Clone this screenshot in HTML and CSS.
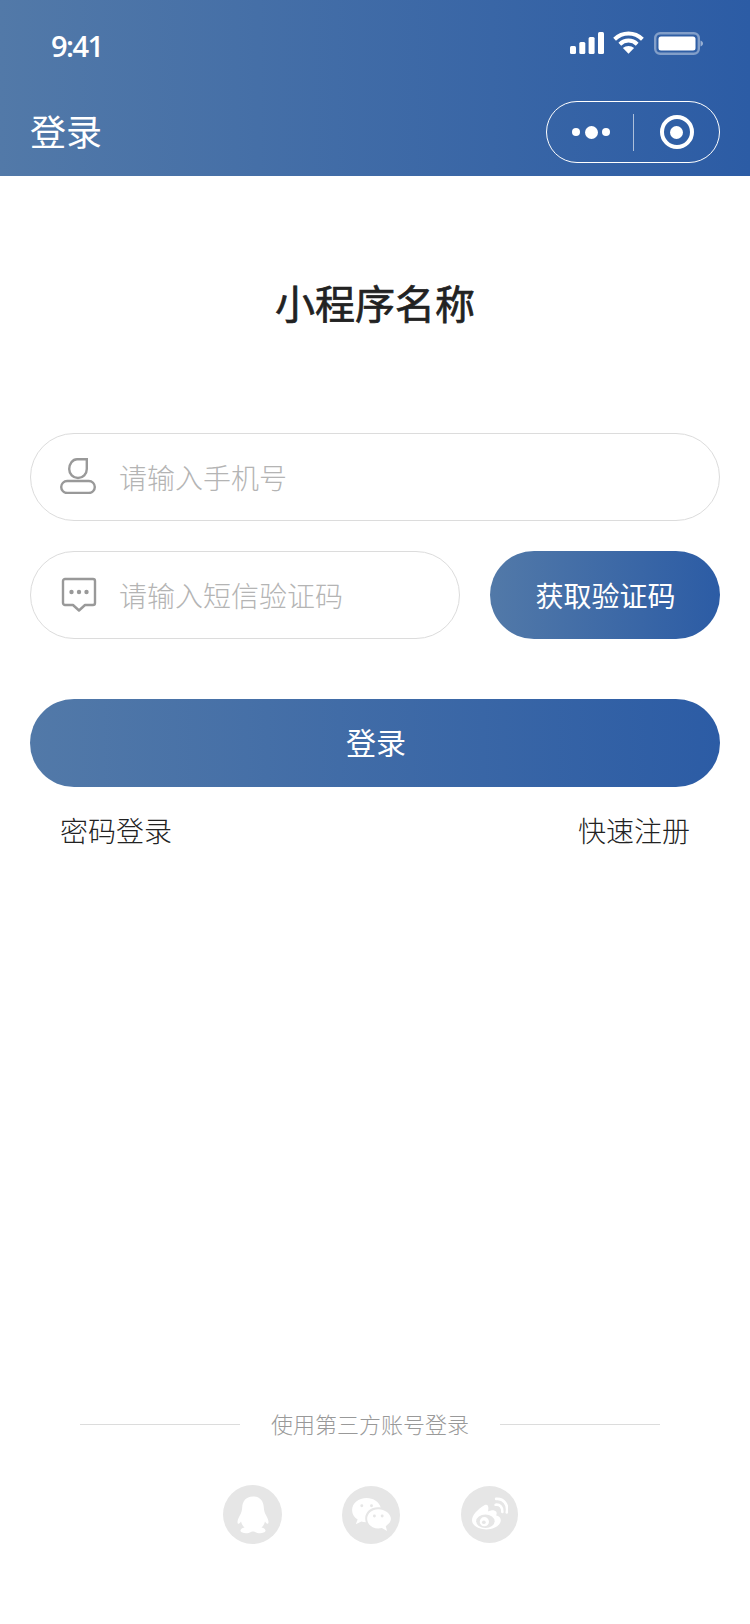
FILE: index.html
```html
<!DOCTYPE html>
<html lang="zh-CN">
    <head>
    <meta charset="utf-8">
    <title>登录</title>
    <link rel="stylesheet" href="styles.css">
    </head>

    <body>
        <div class="page">
            <!-- 顶部状态栏和导航 -->
            <div class="top">
                <div class="status">
                    <span class="time">9:41</span>
                    <div class="status-icons">
                        <svg width="34" height="22" viewBox="0 0 34 22" fill="#fff">
                            <rect x="0" y="14" width="6" height="8" rx="1.5"/>
                            <rect x="9.3" y="10" width="6" height="12" rx="1.5"/>
                            <rect x="18.6" y="5" width="6" height="17" rx="1.5"/>
                            <rect x="28" y="0" width="6" height="22" rx="1.5"/>
                        </svg>
                        <svg class="wifi" width="31" height="23" viewBox="0 0 31 23" fill="none" stroke="#fff" stroke-width="4">
                            <path d="M1.6 8.2C9.4 .6 21.6 .6 29.4 8.2"/>
                            <path d="M6.8 13.2C11.8 8.4 19.2 8.4 24.2 13.2"/>
                            <path d="M15.5 22.8L9.9 17C13 14.2 18 14.2 21.1 17Z" fill="#fff" stroke="none"/>
                        </svg>
                        <svg width="49" height="23" viewBox="0 0 49 23">
                            <rect x="1.200" y="1.200" width="43.600" height="20.600" rx="5" fill="none" stroke="#fff" stroke-opacity=".4" stroke-width="2.400"/>
                            <rect x="4.500" y="4.500" width="37" height="14" rx="2.500" fill="#fff"/>
                            <path d="M46.500 8.500C48 9 49 10.200 49 11.500S48 14 46.500 14.500Z" fill="#fff" fill-opacity=".5"/>
                        </svg>
                    </div>
                </div>
                <div class="nav">
                    <span class="nav-title">登录</span>
                    <div class="capsule">
                        <div class="capsule-more"><i></i><i class="big"></i><i></i></div>
                        <div class="capsule-line"></div>
                        <div class="capsule-close"><i></i></div>
                    </div>
                </div>
            </div>

            <div class="app-name">小程序名称</div>

            <!-- 登录表单 -->
            <div class="form">
                <div class="field">
                    <svg class="field-icon icon-user" width="36" height="36" viewBox="0 0 36 36" fill="none" stroke="#999" stroke-width="2.4">
                        <path d="M17 1.200H26.800V11C26.800 16 23 20 18 20S9.200 16 9.200 11 12.500 1.200 17 1.200Z"/>
                        <rect x="1.200" y="23" width="33.600" height="12" rx="6"/>
                    </svg>
                    <span class="placeholder">请输入手机号</span>
                </div>
                <div class="code-row">
                    <div class="field field-code">
                        <svg class="field-icon icon-msg" width="36" height="36" viewBox="0 0 36 36" fill="none" stroke="#999" stroke-width="2.4" stroke-linejoin="round">
                            <path d="M4 2H32C33 2 34 3 34 4V26C34 27 33 28 32 28H24L18 33.500 12 28H4C3 28 2 27 2 26V4C2 3 3 2 4 2Z"/>
                            <circle cx="10.500" cy="15" r="2.200" fill="#999" stroke="none"/>
                            <circle cx="18" cy="15" r="2.200" fill="#999" stroke="none"/>
                            <circle cx="25.500" cy="15" r="2.200" fill="#999" stroke="none"/>
                        </svg>
                        <span class="placeholder">请输入短信验证码</span>
                    </div>
                    <div class="btn btn-code">获取验证码</div>
                </div>
                <div class="btn btn-login">登录</div>
                <div class="links">
                    <span>密码登录</span>
                    <span>快速注册</span>
                </div>
            </div>

            <!-- 第三方登录 -->
            <div class="other">
                <div class="other-title">
                    <div class="other-line"></div>
                    <span>使用第三方账号登录</span>
                    <div class="other-line"></div>
                </div>
                <div class="other-icons">
                    <div class="circle">
                        <svg width="32" height="38" viewBox="0 0 32 37" fill="#fff">
                            <path d="M16 0C8.500 0 5.500 5 5.200 11 5 14 4.500 16 2.800 19 .8 22.500 0 25.500 .8 27 1.800 28 3.200 26.500 4 25 4.600 27.500 5.800 29.500 7.500 31 4.500 31.800 3.200 33 3.500 34.500 4.300 37 11 37.300 14 35.400 15.300 34.800 16.700 34.800 18 35.400 21 37.300 27.700 37 28.500 34.500 28.800 33 27.500 31.800 24.500 31 26.200 29.500 27.400 27.500 28 25 28.800 26.500 30.200 28 31.200 27 32 25.500 31.200 22.500 29.200 19 27.500 16 27 14 26.800 11 26.500 5 23.500 0 16 0Z"/>
                        </svg>
                    </div>
                    <div class="circle circle-wechat">
                        <svg width="39" height="33" viewBox="0 0 40 34" fill="#fff">
                            <path d="M15 0C6.700 0 0 5.500 0 12.500 0 16.500 2.200 19.800 5.700 22.200L3.800 27 9.500 24.200C11 24.600 12.500 24.800 14.200 24.900 13.800 23.700 13.500 22.400 13.500 21 13.500 14.200 19.500 9.500 26.500 9.500 27.500 9.500 28.500 9.600 29.500 9.800 28 4 22 0 15 0Z"/>
                            <path d="M27 11.500C20.500 11.500 15.500 16 15.500 21.500S20.500 31.500 27 31.500C28.300 31.500 29.500 31.300 30.700 31L36 34 34.700 29C37.800 27 40 24.500 40 21.500 40 16 33.500 11.500 27 11.500Z"/>
                            <circle cx="10" cy="8" r="1.500" fill="#e6e6e6"/>
                            <circle cx="20" cy="8" r="1.500" fill="#e6e6e6"/>
                            <circle cx="23" cy="18.500" r="1.500" fill="#e6e6e6"/>
                            <circle cx="31" cy="18.500" r="1.500" fill="#e6e6e6"/>
                        </svg>
                    </div>
                    <div class="circle circle-weibo">
                        <svg class="weibo" width="37" height="33" viewBox="0 0 36 32">
                            <path d="M13 8C6.500 12 1 17.500 1 22.500 1 28 8 31.500 15 31.500 23 31.500 29 27 29 22.500 29 20 27 18.500 24.500 18 25.500 15.500 25 13.500 22.500 13 20.500 12.700 18 13.500 16.500 14 17.500 10.500 17 6 13 8Z" fill="#fff"/>
                            <ellipse cx="14" cy="23.500" rx="9" ry="6.500" fill="#e6e6e6"/>
                            <circle cx="13" cy="24" r="4.500" fill="#fff"/>
                            <circle cx="12.500" cy="24.500" r="1.800" fill="#e6e6e6"/>
                            <path d="M24 7.500C28 7 31 10 30.500 14.500" fill="none" stroke="#fff" stroke-width="2.600" stroke-linecap="round"/>
                            <path d="M24.500 1.800C31.500 1 36.500 7 34.800 15" fill="none" stroke="#fff" stroke-width="2.600" stroke-linecap="round"/>
                        </svg>
                    </div>
                </div>
            </div>
        </div>
    </body>
</html>
```

FILE: styles.css
```css
*{
    padding:0;
    margin:0;
    box-sizing:border-box;
}

body{
    background-color:#fff;
    font-family:"Noto Sans CJK SC","Noto Sans",sans-serif;
}

.page{
    width:750px;
    height:1624px;
    display:flex;
    flex-direction:column;
}

/*顶部渐变区域*/
.top{
    height:176px;
    background:linear-gradient(90deg,#5279a8,#2c5ca5);
    color:#fff;
}

.status{
    height:88px;
    padding:29px 47px 0 51px;
    display:flex;
    justify-content:space-between;
}

.time{
    font:600 29px/34px "Open Sans",sans-serif;
    letter-spacing:-1.5px;
}

.status-icons{
    display:flex;
    align-items:flex-start;
    gap:10px;
    padding-top:3px;
}

.wifi{
    margin:-1px 0 0 -1px;
}

.nav{
    height:88px;
    padding:13px 30px 0 30px;
    display:flex;
    justify-content:space-between;
}

.nav-title{
    font-size:36px;
    line-height:58px;
}

/*右上角胶囊按钮*/
.capsule{
    width:174px;
    height:62px;
    border:1.5px solid #fff;
    border-radius:31px;
    display:flex;
    align-items:center;
}

.capsule-more{
    width:86px;
    padding-left:2px;
    display:flex;
    justify-content:center;
    align-items:center;
    gap:4.5px;
}

.capsule-more i{
    width:8px;
    height:8px;
    border-radius:50%;
    background-color:#fff;
}

.capsule-more i.big{
    width:13px;
    height:13px;
}

.capsule-line{
    width:1px;
    height:37px;
    background-color:rgba(255,255,255,.6);
}

.capsule-close{
    flex:1;
    display:flex;
    justify-content:center;
}

.capsule-close i{
    width:34px;
    height:34px;
    border:4px solid #fff;
    border-radius:50%;
    display:flex;
    align-items:center;
    justify-content:center;
}

.capsule-close i::after{
    content:"";
    width:13px;
    height:13px;
    border-radius:50%;
    background-color:#fff;
}

/*小程序名称*/
.app-name{
    margin-top:96px;
    text-align:center;
    font-size:40px;
    font-weight:400;
    -webkit-text-stroke:.7px #222;
    line-height:60px;
    color:#222;
}

.form{
    margin-top:101px;
    padding:0 30px;
}

.field{
    height:88px;
    padding-left:29px;
    display:flex;
    align-items:center;
    border:1px solid #dcdcdc;
    border-radius:44px;
}

.field-icon{
    flex:none;
}

.icon-user{
    margin-top:-2px;
}

.icon-msg{
    margin-left:1px;
    margin-right:-1px;
}

.placeholder{
    margin-left:23px;
    font-size:28px;
    font-weight:300;
    color:#b4b4b4;
}

.code-row{
    margin-top:30px;
    display:flex;
    gap:30px;
}

.field-code{
    width:430px;
}

.btn{
    height:88px;
    border-radius:44px;
    background:linear-gradient(90deg,#5279a8,#2c5ca5);
    color:#fff;
    font-size:28px;
    line-height:88px;
    text-align:center;
}

.btn-code{
    width:230px;
    padding-left:1px;
}

.btn-login{
    margin-top:60px;
    padding-left:2px;
    font-size:30px;
    line-height:85px;
}

.links{
    margin-top:23px;
    padding:0 30px;
    display:flex;
    justify-content:space-between;
    font-size:28px;
    font-weight:300;
    line-height:40px;
    color:#222;
}

/*第三方登录*/
.other{
    margin-top:auto;
    padding-bottom:80px;
}

.other-title{
    padding-left:80px;
    display:flex;
    align-items:center;
    font-size:22px;
    font-weight:300;
    line-height:32px;
    color:#999;
}

.other-title span{
    margin:0 31px;
    padding-bottom:2px;
}

.other-line{
    width:160px;
    height:1px;
    background-color:#dcdcdc;
}

.other-icons{
    margin-top:44px;
    padding-left:223px;
    display:flex;
    align-items:center;
    gap:60px;
}

.circle{
    width:59px;
    height:59px;
    border-radius:50%;
    background-color:#e6e6e6;
    display:flex;
    align-items:center;
    justify-content:center;
}

.circle-wechat{
    width:58px;
    height:58px;
}

.circle-weibo{
    width:57px;
    height:57px;
    margin-left:1px;
}

.weibo{
    margin-bottom:2px;
}
```
